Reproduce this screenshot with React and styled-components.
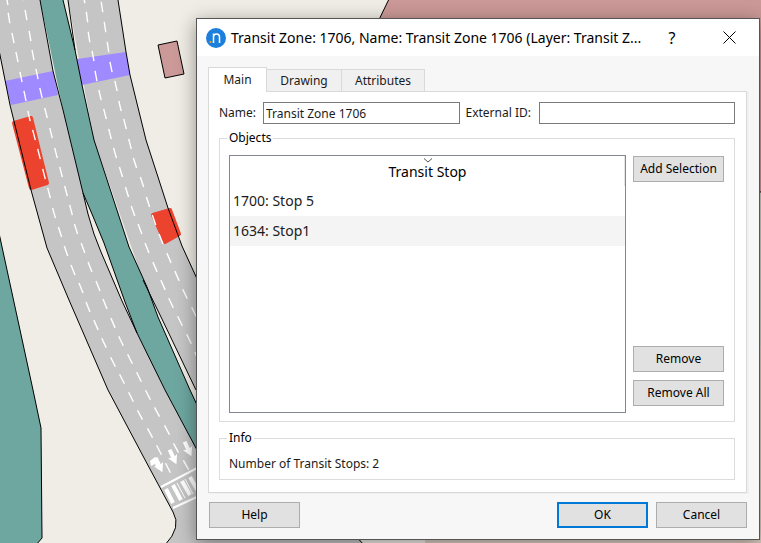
import React from "react";
import styled, { createGlobalStyle } from "styled-components";

const GlobalStyle = createGlobalStyle`
  *, *::before, *::after { box-sizing: border-box; }
  body { margin: 0; background: #f0ede6; font-family: "Noto Sans", "Open Sans", sans-serif; font-size: 12px; line-height: 16px; color: #1b1b1b; }
  button, input { font: inherit; color: inherit; }
`;

const Stage = styled.main`
  position: relative;
  display: grid;
  min-height: 100vh;
  padding: 18px 1px 3px 196px;
  overflow: hidden;
`;

const MapCanvas = styled.svg`
  position: absolute;
  inset: 0;
  width: 100%;
  height: 100%;
`;

const Dialog = styled.section`
  position: relative;
  display: flex;
  flex-direction: column;
  border: 1px solid #555;
  background: #f7f7f7;
  box-shadow: 0 4px 18px rgba(0, 0, 0, 0.4);
`;

const TitleBar = styled.header`
  display: flex;
  align-items: center;
  height: 37px;
  padding: 0 8px 0 9px;
  background: #fff;
`;

const Logo = styled.svg`
  flex: none;
  width: 20px;
  height: 20px;
  margin-right: 5px;
`;

const Title = styled.h1`
  flex: 1;
  margin: 0;
  font-size: 14px;
  font-weight: 400;
  line-height: 20px;
  color: #000;
  white-space: nowrap;
`;

const TitleButton = styled.button`
  display: grid;
  place-items: center;
  width: ${(p) => (p.$wide ? "44px" : "28px")};
  height: 36px;
  margin-left: ${(p) => (p.$wide ? "21px" : "0")};
  padding: 0;
  border: 0;
  background: none;
  color: #000;
  font-size: 16px;
`;

const Body = styled.div`
  display: flex;
  flex: 1;
  flex-direction: column;
  padding: 11px 12px 11px 11px;
`;

const TabList = styled.div`
  display: flex;
  align-items: flex-end;
  height: 24px;
`;

const Tab = styled.button`
  position: relative;
  z-index: ${(p) => (p.$active ? 1 : 0)};
  width: ${(p) => p.$width};
  height: ${(p) => (p.$active ? "25px" : "22px")};
  margin-bottom: ${(p) => (p.$active ? "-1px" : "0")};
  padding: 0;
  border: 1px solid #d9d9d9;
  border-bottom: 0;
  border-left-width: ${(p) => (p.$active ? "1px" : "0")};
  background: ${(p) => (p.$active ? "#fff" : "#f0f0f0")};
`;

const Pane = styled.div`
  display: flex;
  flex: 1;
  flex-direction: column;
  padding: 10px 11px 12px 10px;
  border: 1px solid #d9d9d9;
  background: #fff;
  box-shadow: 2px 1px 0 #f0f0f0;
`;

const FieldRow = styled.div`
  display: grid;
  grid-template-columns: 38px 1fr 67px 1fr;
  column-gap: 6px;
  align-items: center;
`;

const FieldLabel = styled.label`
  white-space: nowrap;
`;

const TextInput = styled.input`
  min-width: 0;
  height: 22px;
  padding: 0 2px;
  border: 1px solid #7a7a7a;
  background: #fff;
  outline: 0;
`;

const Group = styled.fieldset`
  display: flex;
  flex: ${(p) => (p.$grow ? "1" : "none")};
  flex-direction: column;
  min-width: 0;
  margin: ${(p) => (p.$grow ? "6px" : "8px")} 0 0;
  padding: ${(p) => (p.$grow ? "9px 10px 8px 9px" : "10px 9px 7px")};
  border: 1px solid #dcdcdc;
`;

const Legend = styled.legend`
  margin-left: -2px;
  padding: 0 2px;
  color: #000;
`;

const ObjectsLayout = styled.div`
  display: grid;
  flex: 1;
  grid-template-columns: 1fr 91px;
  column-gap: 7px;
`;

const ListBox = styled.div`
  border: 1px solid #828790;
  background: #fff;
`;

const StopTable = styled.table`
  width: 100%;
  border-collapse: collapse;
  font-size: 14px;
  line-height: 20px;
`;

const HeaderCell = styled.th`
  position: relative;
  height: 30px;
  padding: 2px 0 0;
  font-weight: 400;
  color: #000;
  box-shadow: inset -1px 0 0 #e5e5e5;
`;

const SortMark = styled.svg`
  position: absolute;
  top: 2px;
  left: calc(50% - 5px);
  width: 10px;
  height: 5px;
`;

const StopCell = styled.td`
  height: 30px;
  padding: 0 3px;
  background: ${(p) => (p.$shaded ? "#f4f4f4" : "#fff")};
`;

const ButtonColumn = styled.div`
  display: flex;
  flex-direction: column;
  gap: 8px;
  padding: 1px 0 7px;
`;

const Spacer = styled.div`
  flex: 1;
`;

const PushButton = styled.button`
  width: 91px;
  height: 26px;
  padding: 0;
  border: ${(p) => (p.$primary ? "2px solid #0078d7" : "1px solid #adadad")};
  background: #e1e1e1;
  color: #000;
  white-space: nowrap;
`;

const Footer = styled.footer`
  display: flex;
  gap: 8px;
  margin-top: 9px;
  padding-left: 1px;
`;

const lanes = [
  [[3, -17], [7, 0], [9, 18], [13, 38], [17, 57], [21, 77], [25, 96], [29, 116], [34, 135], [39, 154], [44, 174], [49, 193], [54, 213], [60, 232], [66, 251], [73, 270], [81, 288], [88, 307], [96, 325], [104, 343], [113, 362], [122, 379], [131, 397], [140, 415], [150, 433], [159, 450], [168, 468]],
  [[23, -5], [26, 15], [30, 36], [33, 55], [37, 74], [41, 93], [46, 113], [51, 133], [56, 153], [61, 172], [66, 191], [71, 210], [76, 229], [83, 248], [90, 267], [98, 286], [105, 304], [113, 323], [121, 341], [130, 359], [139, 377], [148, 395], [157, 412], [167, 430], [176, 448], [186, 465]],
  [[84, -2], [87, 17], [89, 37], [93, 56], [96, 76], [100, 95], [105, 114], [110, 134], [115, 153], [121, 172], [127, 192], [133, 211], [140, 229], [147, 248], [155, 267], [163, 285], [171, 303], [180, 321], [189, 339], [197, 357]],
  [[102, 7], [105, 27], [108, 47], [111, 67], [116, 86], [120, 106], [125, 124], [130, 144], [135, 163], [142, 182], [148, 202], [154, 220], [161, 239], [169, 258], [177, 276], [185, 294], [194, 312]],
];

const lanePath = (points) =>
  points
    .map(([x, y], i) => {
      const a = points[Math.max(i - 1, 0)];
      const b = points[Math.min(i + 1, points.length - 1)];
      const length = Math.hypot(b[0] - a[0], b[1] - a[1]);
      const dx = ((b[0] - a[0]) / length) * 5.3;
      const dy = ((b[1] - a[1]) / length) * 5.3;
      return `M${x - dx} ${y - dy}L${x + dx} ${y + dy}`;
    })
    .join("");

const arrows = [[159, 465], [173, 457], [188, 449]];

function StreetMap() {
  return (
    <MapCanvas viewBox="0 0 761 543" preserveAspectRatio="xMinYMin slice" aria-hidden="true">
      <path fill="#f0ede6" d="M0 0H761V543H0Z" />
      <path fill="#cb9997" stroke="#000" d="M389-1L374 30V192H762V-1Z" />
      <path fill="#cfcfc4" d="M755 193H761V345H755Z" />
      <path fill="#dccdc1" d="M425 535H755V345H761V543H425Z" />
      <path fill="#6ea7a0" stroke="#000" d="M-1 233L33 390L41 428L42 538L36 545H-1Z" />
      <path fill="#c5c5c5" d="M-1 0H40L53 71L83 193L88 214L94 234L101 252L122 301L137 333L165 390L197 450L260 500H350L362 545H165Q182 527 173 512L143 456L108 390L69 300L47 248L31 190L10 105L-1 50Z" />
      <path fill="none" stroke="#000" d="M352 532L364 545" />
      <path fill="#c5c5c5" d="M68 0H118L126 52L130 75L146 140L168 208L182 246L210 305V420L196 390L161 317L143 280L94 140Z" />
      <path fill="#6ea7a0" d="M40 0H63L75 50L82 85L94 140L129 247L147 287L158 317L190 390L197 404V450L165 390L137 333L125 302L104 243L92 214L83 193L63 110Z" />
      <path fill="#9f8aff" d="M5 81L53 71L58 95L11 105ZM77 59L126 52L130 75L82 85Z" />
      <path fill="#ec432e" stroke="#ec432e" strokeWidth="4" strokeLinejoin="round" d="M14 123L31 118L47 183L31 188ZM153 215L170 210L179 234L165 242Z" />
      <g fill="none" stroke="#000">
        <path d="M-1 50L10 105L31 190L47 248L69 300L108 390L143 456L173 512Q182 527 165 545" />
        <path d="M40 0L53 71L63 110L83 193L92 214L104 243L125 302L137 333L165 390L197 450" />
        <path d="M83 193L88 214L94 234L101 252L122 301L137 333" />
        <path d="M63 0L75 50L82 85L94 140L129 247L147 287L158 317L190 390L198 407" />
        <path d="M68 0L75 50M143 280L161 317L196 390" />
        <path d="M118 0L126 52L130 75L146 140L168 208L182 246L198 281" />
        <path fill="#cb9997" d="M158 45L177 41L184 74L165 78Z" />
      </g>
      {lanes.map((points, i) => (
        <path key={i} d={lanePath(points)} stroke="#fff" strokeWidth="1.4" />
      ))}
      {arrows.map(([x, y], i) => (
        <path key={i} fill="#fff" transform={`translate(${x} ${y}) rotate(-25)`} d="M-5-1L0 8L5-1L2 0V-8H-2V0Z" />
      ))}
      <path fill="#fff" d="M150 461L155 457L158 460L161 468L157 469L155 464L151 466Z" />
      <g fill="none" stroke="#fff">
        <path strokeWidth="2" d="M161 487L199 467M173 508L199 496" />
        <path strokeWidth="4" d="M166 489L173 503M173 485L181 500M182 481L190 495M190 477L198 491" />
        <path strokeWidth="1" d="M177 483L185 498M185 479L193 494" />
      </g>
    </MapCanvas>
  );
}

const stops = ["1700: Stop 5", "1634: Stop1"];

export default function App() {
  return (
    <>
      <GlobalStyle />
      <Stage>
        <StreetMap />
        <Dialog role="dialog" aria-labelledby="dialog-title">
          <TitleBar>
            <Logo viewBox="0 0 20 20" aria-hidden="true">
              <circle cx="10" cy="10" r="10" fill="#1c7fdc" />
              <path d="M7.500 15V5.500M7.500 8.500Q8 6 10.500 6Q13.500 6 13.500 9V15" fill="none" stroke="#fff" strokeWidth="1.500" />
              <circle cx="4.500" cy="14" r="1.100" fill="#e8a33d" />
            </Logo>
            <Title id="dialog-title">Transit Zone: 1706, Name: Transit Zone 1706 (Layer: Transit Z...</Title>
            <TitleButton aria-label="What's this">?</TitleButton>
            <TitleButton $wide aria-label="Close">
              <svg width="13" height="13" viewBox="0 0 13 13" aria-hidden="true">
                <path d="M.5.5L12.500 12.500M12.500.5L.5 12.500" stroke="#000" fill="none" />
              </svg>
            </TitleButton>
          </TitleBar>
          <Body>
            <TabList role="tablist">
              <Tab role="tab" aria-selected="true" $active $width="59px">Main</Tab>
              <Tab role="tab" aria-selected="false" $width="75px">Drawing</Tab>
              <Tab role="tab" aria-selected="false" $width="83px">Attributes</Tab>
            </TabList>
            <Pane role="tabpanel">
              <FieldRow>
                <FieldLabel htmlFor="zone-name">Name:</FieldLabel>
                <TextInput id="zone-name" defaultValue="Transit Zone 1706" />
                <FieldLabel htmlFor="zone-external-id">External ID:</FieldLabel>
                <TextInput id="zone-external-id" />
              </FieldRow>
              <Group $grow>
                <Legend>Objects</Legend>
                <ObjectsLayout>
                  <ListBox>
                    <StopTable>
                      <thead>
                        <tr>
                          <HeaderCell scope="col">
                            <SortMark viewBox="0 0 10 5" aria-hidden="true">
                              <path d="M1 .5L5 4L9 .5" fill="none" stroke="#555" />
                            </SortMark>
                            Transit Stop
                          </HeaderCell>
                        </tr>
                      </thead>
                      <tbody>
                        {stops.map((stop, i) => (
                          <tr key={stop}>
                            <StopCell $shaded={i % 2 === 1}>{stop}</StopCell>
                          </tr>
                        ))}
                      </tbody>
                    </StopTable>
                  </ListBox>
                  <ButtonColumn>
                    <PushButton>Add Selection</PushButton>
                    <Spacer />
                    <PushButton>Remove</PushButton>
                    <PushButton>Remove All</PushButton>
                  </ButtonColumn>
                </ObjectsLayout>
              </Group>
              <Group>
                <Legend>Info</Legend>
                <span>Number of Transit Stops: 2</span>
              </Group>
            </Pane>
            <Footer>
              <PushButton>Help</PushButton>
              <Spacer />
              <PushButton $primary>OK</PushButton>
              <PushButton>Cancel</PushButton>
            </Footer>
          </Body>
        </Dialog>
      </Stage>
    </>
  );
}
